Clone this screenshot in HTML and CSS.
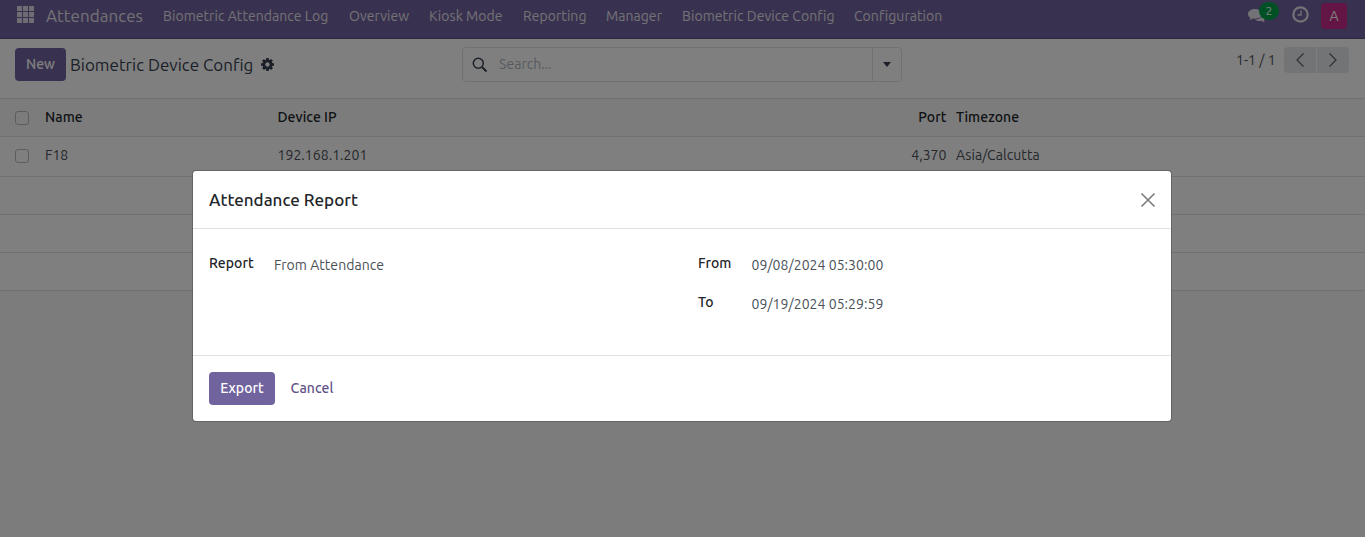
FILE: index.html
```html
<!DOCTYPE html>
<html lang="en">
<head>
<meta charset="utf-8">
<title>Attendances</title>
<link rel="stylesheet" href="styles.css">
</head>
<body>
<div class="app">
  <header class="navbar">
    <svg class="apps" width="17" height="17" viewBox="0 0 17 17" fill="currentColor"><path d="M0 0h5v5H0zM6 0h5v5H6zM12 0h5v5h-5zM0 6h5v5H0zM6 6h5v5H6zM12 6h5v5h-5zM0 12h5v5H0zM6 12h5v5H6zM12 12h5v5h-5z"/></svg>
    <span class="brand">Attendances</span>
    <nav class="menu">
      <span class="m-log">Biometric Attendance Log</span>
      <span class="m-overview">Overview</span>
      <span class="m-kiosk">Kiosk Mode</span>
      <span class="m-reporting">Reporting</span>
      <span class="m-manager">Manager</span>
      <span class="m-device">Biometric Device Config</span>
      <span class="m-config">Configuration</span>
    </nav>
    <div class="systray">
      <div class="chat">
        <svg width="18" height="16" viewBox="0 0 18 16" fill="currentColor"><path d="M7 1C3.100 1 0 3.200 0 6c0 1.600 1 3 2.600 3.900-.3.900-.9 1.500-1.300 2 1.500-.1 2.700-.6 3.700-1.400.6.100 1.300.2 2 .2 3.900 0 7-2.100 7-4.700S10.900 1 7 1z"/><path d="M15 4.500c.3 3.900-3.200 6.900-8.100 7.200 1.200.9 3 1.400 4.900 1.300.6 0 1.100-.1 1.500-.2 1 .8 2.200 1.300 3.600 1.400-.5-.5-.9-1.100-1.200-2C17 11.400 18 10.200 18 8.600c0-1.700-1.100-3.200-3-4.100z"/></svg>
        <span class="badge">2</span>
      </div>
      <svg class="clock" width="17" height="17" viewBox="0 0 17 17" fill="none" stroke="currentColor"><circle cx="8.500" cy="8.500" r="7.200" stroke-width="2.200"/><path d="M9 4.500V9H5.500" stroke-width="1.300"/></svg>
      <span class="avatar">A</span>
    </div>
  </header>
  <section class="control">
    <div class="control-left">
      <button class="btn btn-new">New</button>
      <span class="crumb">Biometric Device Config</span>
      <svg class="gear" width="13" height="13" viewBox="0 0 1536 1536" fill="currentColor"><path d="M1024 768q0-106-75-181t-181-75-181 75-75 181 75 181 181 75 181-75 75-181zm512-109v222q0 12-8 23t-20 13l-185 28q-19 54-39 91 35 50 107 138 10 12 10 25t-9 23q-27 37-99 108t-94 71q-12 0-26-9l-138-108q-44 23-91 38-16 136-29 186-7 28-36 28H657q-14 0-24.500-8.500T621 1506l-28-184q-49-16-90-37l-141 107q-10 9-25 9-14 0-25-11-126-114-165-168-7-10-7-23 0-12 8-23 15-21 51-66.500t54-70.500q-27-50-41-99l-183-27q-13-2-21-12.500T0 877V655q0-12 8-23t19-13l186-28q14-46 39-92-40-57-107-138-10-12-10-24 0-10 9-23 26-36 98.500-107.500T337 135q13 0 26 10l138 107q44-23 91-38 16-136 29-186 7-28 36-28h222q14 0 24.500 8.500T915 30l28 184q49 16 90 37l142-107q9-9 24-9 13 0 25 10 129 119 165 170 7 8 7 22 0 12-8 23-15 21-51 66.500t-54 70.500q26 50 41 98l183 28q13 2 21 12.500t8 23.500z"/></svg>
    </div>
    <div class="search">
      <svg class="lens" width="16" height="16" viewBox="0 0 16 16" fill="none" stroke="currentColor"><circle cx="6.300" cy="6.300" r="5" stroke-width="1.500"/><path d="M10 10l4.500 4.500" stroke-width="2"/></svg>
      <span class="placeholder">Search...</span>
      <span class="toggle"><i class="caret"></i></span>
    </div>
    <div class="pager">
      <span class="range">1-1 / 1</span>
      <span class="page prev"><svg width="10" height="16" viewBox="0 0 10 16" fill="none" stroke="currentColor" stroke-width="1.200"><path d="M8.500 1.500L2 8l6.500 6.500"/></svg></span>
      <span class="page next"><svg width="10" height="16" viewBox="0 0 10 16" fill="none" stroke="currentColor" stroke-width="1.200"><path d="M1.500 1.500L8 8l-6.500 6.500"/></svg></span>
    </div>
  </section>
  <main class="list">
    <div class="row head">
      <i class="check"></i><span>Name</span><span>Device IP</span><span class="num">Port</span><span>Timezone</span>
    </div>
    <div class="row record">
      <i class="check"></i><span>F18</span><span>192.168.1.201</span><span class="num">4,370</span><span>Asia/Calcutta</span>
    </div>
    <div class="row"></div>
    <div class="row"></div>
    <div class="row"></div>
  </main>
</div>
<div class="backdrop">
  <div class="dialog">
    <div class="dialog-head">
      <span class="title">Attendance Report</span>
      <svg class="close" width="16" height="16" viewBox="0 0 16 16" fill="none" stroke="currentColor" stroke-width="1.700"><path d="M1.500 1.500l13 13M14.500 1.500l-13 13"/></svg>
    </div>
    <div class="dialog-body">
      <div class="group left">
        <span class="label">Report</span><span class="value">From Attendance</span>
      </div>
      <div class="group right">
        <span class="label">From</span><span class="value">09/08/2024 05:30:00</span>
        <span class="label">To</span><span class="value">09/19/2024 05:29:59</span>
      </div>
    </div>
    <div class="dialog-foot">
      <button class="btn btn-export">Export</button>
      <button class="btn btn-cancel">Cancel</button>
    </div>
  </div>
</div>
</body>
</html>
```
FILE: styles.css
```css
* { box-sizing: border-box; }
body {
  margin: 0;
  height: 537px;
  overflow: hidden;
  font: 14px/20px Ubuntu, "Noto Sans", sans-serif;
  letter-spacing: 0.05px;
  color: #495057;
  white-space: nowrap;
}
svg { display: block; flex: none; }
.app { height: 537px; background: #f8f9fa; }

.navbar {
  display: flex;
  height: 39px;
  padding: 0 18px 7px 17px;
  align-items: center;
  background: #71639e;
  border-bottom: 1px solid #5a4f7f;
  color: #e6e4ec;
}
.apps { margin-top: -2px; color: #dedbe6; }
.brand { margin-left: 12px; width: 97px; font-size: 17px; }
.menu { display: flex; gap: 20px; margin-left: 20px; }
.m-log { width: 166px; }
.m-overview { width: 60px; }
.m-kiosk { width: 74px; }
.m-reporting { width: 63px; }
.m-manager { width: 56px; }
.m-device { width: 152px; }
.m-config { width: 88px; }
.systray { display: flex; align-items: center; margin-left: auto; }
.chat { position: relative; margin-right: 26px; }
.badge {
  position: absolute;
  left: 11px;
  top: -6px;
  width: 20px;
  height: 18px;
  border-radius: 9px;
  background: #00a04a;
  color: #fff;
  font-size: 12px;
  line-height: 17px;
  text-align: center;
}
.clock { margin: -3px 12px 0 0; }
.avatar {
  width: 26px;
  height: 26px;
  border-radius: 4px;
  background: #c72b8a;
  color: #fff;
  line-height: 26px;
  text-align: center;
}

.control {
  display: flex;
  height: 59px;
  padding: 8px 16px 0 15px;
  background: #fff;
}
.control-left { display: flex; align-items: center; height: 35px; width: 447px; }
.btn {
  height: 33px;
  padding: 0;
  border: 0;
  border-radius: 4px;
  background: #71639e;
  color: #fff;
  font: 500 14px/31px Ubuntu, "Noto Sans", sans-serif;
  letter-spacing: 0.05px;
}
.btn-new { width: 51px; }
.crumb { margin-left: 4px; width: 184px; padding-top: 1px; font-size: 17px; letter-spacing: 0; color: #374151; }
.gear { margin: -1px 0 0 7px; color: #374151; }
.search {
  display: flex;
  align-items: center;
  width: 440px;
  height: 35px;
  border: 1px solid #dee2e6;
  border-radius: 4px;
}
.lens { margin-left: 9px; color: #374151; }
.placeholder { flex: 1; margin: -2px 0 0 11px; color: #adb5bd; }
.toggle {
  display: flex;
  align-items: center;
  justify-content: center;
  width: 29px;
  height: 33px;
  border-left: 1px solid #dee2e6;
}
.caret { border: 5px solid transparent; border-width: 5px 4.500px 0; border-top-color: #374151; }
.pager { display: flex; margin-left: auto; height: 26px; line-height: 26px; }
.range { width: 48px; }
.page {
  display: flex;
  align-items: center;
  justify-content: center;
  width: 32px;
  background: #e7e9ed;
  color: #5c6066;
}
.prev { border-radius: 4px 0 0 4px; }
.next { margin-left: 1px; border-radius: 0 4px 4px 0; }

.list { border-top: 1px solid #dee2e6; }
.row {
  display: grid;
  grid-template-columns: 30px 232.500px 1fr 346px 409px;
  align-items: center;
  height: 38px;
  padding: 0 0 2px 15px;
  border-bottom: 1px solid #dee2e6;
  background: #fff;
}
.head { background: #f8f9fa; color: #212529; font-weight: 500; }
.record { height: 40px; padding-bottom: 4px; }
.check {
  width: 14px;
  height: 14px;
  margin-top: 2px;
  border: 1px solid #b6bac0;
  border-radius: 3px;
}
.num { text-align: right; padding-right: 9.500px; }

.backdrop {
  position: absolute;
  inset: 0;
  padding: 170px 0 0 192px;
  background: rgba(0, 0, 0, 0.5);
}
.dialog {
  width: 980px;
  height: 252px;
  border: 1px solid rgba(0, 0, 0, 0.2);
  border-radius: 4px;
  background: #fff;
  background-clip: padding-box;
}
.dialog-head {
  display: flex;
  align-items: center;
  justify-content: space-between;
  height: 58px;
  padding: 0 15px 0 16px;
  border-bottom: 1px solid #dee2e6;
}
.title { font-size: 17px; font-weight: 500; letter-spacing: 0; color: #212529; }
.close { color: #7f7f7f; }
.dialog-body { display: flex; height: 126px; padding: 16px; }
.group { display: grid; flex: none; width: 489px; align-content: start; grid-auto-rows: 39px; line-height: 37px; }
.left { grid-template-columns: 65px 1fr; }
.right { width: 457px; grid-template-columns: 53.500px 1fr; }
.label { font-weight: 500; color: #212529; }
.value { padding-top: 2px; }
.dialog-foot {
  display: flex;
  gap: 4px;
  padding: 16px;
  border-top: 1px solid #dee2e6;
}
.btn-export { width: 66px; }
.btn-cancel { width: 66px; background: none; color: #5f5388; }
```
